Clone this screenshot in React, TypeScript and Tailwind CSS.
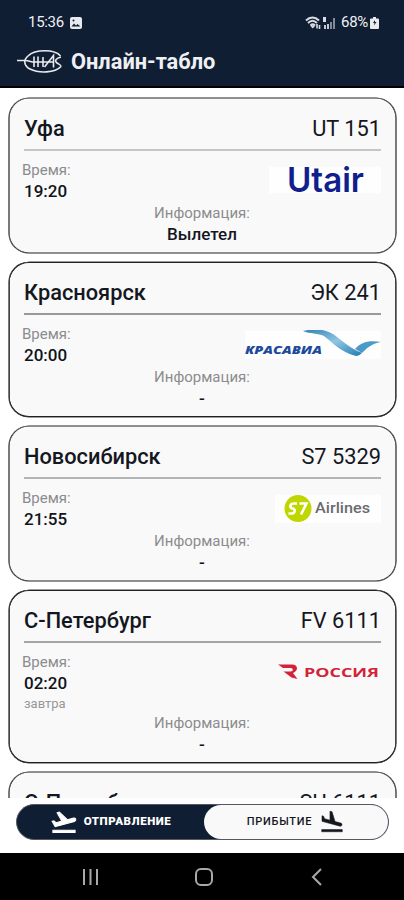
import React from "react";
import { MdFlightLand, MdFlightTakeoff } from "react-icons/md";

type Flight = {
  city: string;
  code: string;
  time: string;
  day?: string;
  info: string;
  logo?: React.ReactNode;
  frame: string;
  line: string;
};

const softFrame = "shadow-[0_0_0_0.6px_#222,inset_0_0_0_0.6px_#222]";
const darkFrame = "shadow-[0.4px_0_0_0.2px_#222,-0.4px_0_0_0.2px_#222,inset_0_0.4px_0_0.6px_#222,inset_0_-0.4px_0_0.6px_#222]";

const UtairLogo = () => (
  <svg width="112" height="32" viewBox="0 0 112 32" className="mt-[-1px]">
    <rect y="2" width="112" height="26" fill="#fefefe" />
    <text x="18" y="27" textLength="77" fontSize="34" fontWeight="600" fill="#101e8e" fontFamily="Inter, sans-serif" lengthAdjust="spacingAndGlyphs">
      Utair
    </text>
  </svg>
);

const KrasaviaLogo = () => (
  <svg width="138" height="30" viewBox="0 0 138 30">
    <defs>
      <linearGradient id="wing" x1="0" y1="0" x2="1" y2="1">
        <stop offset="0" stopColor="#2d7fb5" />
        <stop offset="0.5" stopColor="#8fc6e2" />
        <stop offset="1" stopColor="#1f7cb4" />
      </linearGradient>
    </defs>
    <rect x="2" y="1" width="136" height="28" fill="#fefefe" />
    <text x="2" y="23.5" textLength="77" fontSize="11" fontWeight="800" fontStyle="italic" fill="#1c4b9c" fontFamily="'Open Sans', sans-serif" lengthAdjust="spacingAndGlyphs">
      КРАСАВИА
    </text>
    <path d="M60 1c8-2 18-2 23 0 11 3 20 16 36 22-2 2-4 3-6 3C97 22 89 12 81 6 75 3 67 4 60 1Z" fill="url(#wing)" />
    <path d="M112 19c6-7 14-9 26-7-10 2-14 6-19 11Z" fill="#4b9bc9" />
  </svg>
);

const S7Logo = () => (
  <svg width="106" height="30" viewBox="0 0 106 30">
    <rect y="1" width="106" height="28" fill="#fefefe" />
    <circle cx="23" cy="14.5" r="13.5" fill="#bfd600" />
    <path d="M22 9.500h-3c-4.500 0-4.700 4.500-1.500 5 3.500.5 2.500 5-1 5H13.500" fill="none" stroke="#fff" strokeWidth="2.600" />
    <path d="M24.500 9.500h7L26 20.500" fill="none" stroke="#fff" strokeWidth="2.600" />
    <text x="40" y="19" textLength="55" fontSize="15.500" fontWeight="500" fill="#6a6c70" fontFamily="Roboto, sans-serif" lengthAdjust="spacingAndGlyphs">
      Airlines
    </text>
  </svg>
);

const RossiyaLogo = () => (
  <svg width="104" height="30" viewBox="0 0 104 30">
    <path d="M1 6.500h14c6.500 0 6.500 6.500 1 8.500l4.500 6-6-1.500-8-6h7c3 0 3-3.500 0-3.500H6Z" fill="#d22338" />
    <text x="27" y="18.500" textLength="75" fontSize="12.500" fontWeight="700" fill="#d22338" fontFamily="'Open Sans', sans-serif" lengthAdjust="spacingAndGlyphs">
      РОССИЯ
    </text>
  </svg>
);

const flights: Flight[] = [
  { city: "Уфа", code: "UT 151", time: "19:20", info: "Вылетел", logo: <UtairLogo />, frame: softFrame, line: "border-[#c4c5c8]" },
  { city: "Красноярск", code: "ЭК 241", time: "20:00", info: "-", logo: <KrasaviaLogo />, frame: darkFrame, line: "border-[#999]" },
  { city: "Новосибирск", code: "S7 5329", time: "21:55", info: "-", logo: <S7Logo />, frame: softFrame, line: "border-[#b4b4b6]" },
  { city: "С-Петербург", code: "FV 6111", time: "02:20", day: "завтра", info: "-", logo: <RossiyaLogo />, frame: darkFrame, line: "border-[#a4a4a6]" },
  { city: "С-Петербург", code: "SU 6111", time: "02:20", day: "завтра", info: "-", frame: softFrame, line: "border-[#aaa]" },
];

const FlightCard: React.FC<{ flight: Flight }> = ({ flight }) => {
  return (
    <div className={`shrink-0 rounded-[20px] bg-[#f9f9fa] px-[15px] ${flight.day ? "h-[173px]" : "h-[155px]"} ${flight.frame}`}>
      <div className={`flex h-[53px] items-center justify-between border-b-2 pt-[12px] text-[21.8px] text-[#15171f] ${flight.line}`}>
        <span className="font-medium">{flight.city}</span>
        <span>{flight.code}</span>
      </div>
      <div className={`flex justify-between ${flight.day ? "h-[63px]" : "h-[45px]"}`}>
        <div className="pt-[9px]">
          <p className="-ml-0.5 text-[15px] leading-[20px] text-[#8c8c8e]">Время:</p>
          <p className="text-[17px] leading-[23px] font-medium text-[#111319]">{flight.time}</p>
          {flight.day && <p className="text-[13px] leading-[18px] text-[#97979a]">{flight.day}</p>}
        </div>
        <div className="pt-[15px]">{flight.logo}</div>
      </div>
      <div className="-ml-px pt-[7px] text-center">
        <p className="text-[15px] leading-[20px] text-[#8c8c8e]">Информация:</p>
        <p className="text-[17px] leading-[23px] font-medium text-[#15171f]">{flight.info}</p>
      </div>
    </div>
  );
};

const Header = () => (
  <header className="h-[88px] shrink-0 border-b-2 border-black bg-[#101e33] text-[#eef0f3]">
    <div className="flex h-[45px] items-center justify-between pr-[25px] pl-[28px]">
      <div className="flex items-center gap-[6px] text-[15px] tracking-[-0.3px]">
        <span>15:36</span>
        <svg width="12" height="12" viewBox="0 0 12 12">
          <rect width="12" height="12" rx="2" fill="#e8eaee" />
          <path d="m1.500 9.500 2.500-3 2 2 1.500-1.500 3 2.500Z" fill="#101e33" />
          <circle cx="3.500" cy="3.500" r="1" fill="#101e33" />
        </svg>
      </div>
      <div className="flex items-center text-[15px]">
        <svg width="32" height="14" viewBox="0 0 32 14" className="mr-[4px]" fill="none" stroke="#d9dde3">
          <path d="M1 4.500c4-4 9-4 13 0M3 7c3-3 6-3 9 0M5.500 9.500c1.500-1.500 3-1.500 4.500 0" strokeWidth="2" />
          <path d="M7.700 12.500 5 9.500h5.500Z" fill="#d9dde3" stroke="none" />
          <path d="M12 8v4.500M14.500 9v4" strokeWidth="1.600" />
          <path d="M19.500 1v5" strokeWidth="3" />
          <path d="M20 9v4M23 8v5" strokeWidth="1.800" />
          <path d="M26 6v7M29 2v11" strokeWidth="1.800" stroke="#8d96a4" />
        </svg>
        <span className="tracking-[-0.3px]">68%</span>
        <svg width="9" height="12" viewBox="0 0 9 12" className="ml-[2px]">
          <path d="M3 0h3v1.500h2a1 1 0 0 1 1 1V11a1 1 0 0 1-1 1H1a1 1 0 0 1-1-1V2.500a1 1 0 0 1 1-1h2Z" fill="#e8eaee" />
          <path d="M5 3 3 6h1.500L4 8.500 6.500 5H5Z" fill="#101e33" />
        </svg>
      </div>
    </div>
    <div className="flex h-[34px] items-center pl-[17px]">
      <svg width="46" height="26" viewBox="0 0 46 26" fill="none" stroke="#e8eaee" strokeWidth="1.600">
        <path d="M43.500 7C38 0 18 0 11 7c-5 4-4 10 2 13 9 4.500 25 4 31-2.500" />
        <path d="M0 11.500h9c3 0 4 1.500 7 1.500h21M17 7.500v10.500M21 7.500v10.500M26 8v10M27.500 18l9-11.500v12" />
        <path d="M44 8c-5 1-7 4-4 6 2 1.500 4 1.500 4 3.500" />
      </svg>
      <h1 className="ml-[8px] text-[21.8px] font-bold">Онлайн-табло</h1>
    </div>
  </header>
);

const Tabs = () => (
  <div className="mr-[15px] ml-[16px] mt-[6px] flex h-[36px] shrink-0 rounded-full border border-[#55585f] bg-[#101e33]">
    <button className="flex w-[187px] items-center justify-center gap-[6px] text-[11.5px] font-black tracking-[0.55px] text-white">
      <MdFlightTakeoff size={28} className="stroke-current stroke-[0.9px] [&>path[fill=none]]:stroke-none" />
      <span>ОТПРАВЛЕНИЕ</span>
    </button>
    <button className="flex flex-1 items-center justify-center gap-[7px] rounded-full bg-[#f9f9fa] text-[11px] font-medium tracking-[0.75px] text-[#15171f]">
      <span>ПРИБЫТИЕ</span>
      <MdFlightLand size={26} className="stroke-current stroke-[0.5px] [&>path[fill=none]]:stroke-none" />
    </button>
  </div>
);

const NavBar = () => (
  <nav className="mt-auto flex h-[47px] shrink-0 items-center bg-black">
    <svg width="404" height="24" viewBox="0 0 404 24" fill="none" stroke="#a9a9a9" strokeWidth="2">
      <path d="M84 4v16M90.500 4v16M97 4v16" />
      <rect x="196" y="4" width="16" height="16" rx="5" />
      <path d="m321 4-8 8 8 8" />
    </svg>
  </nav>
);

const App: React.FC = () => {
  return (
    <div className="flex h-[900px] w-[404px] flex-col overflow-hidden bg-white font-[Roboto,sans-serif]">
      <Header />
      <main className="flex h-[710px] shrink-0 flex-col gap-[9.1px] overflow-hidden pt-[9.7px] pr-[8px] pl-[9px]">
        {flights.map((flight, i) => (
          <FlightCard key={i} flight={flight} />
        ))}
      </main>
      <Tabs />
      <NavBar />
    </div>
  );
};

export default App;
